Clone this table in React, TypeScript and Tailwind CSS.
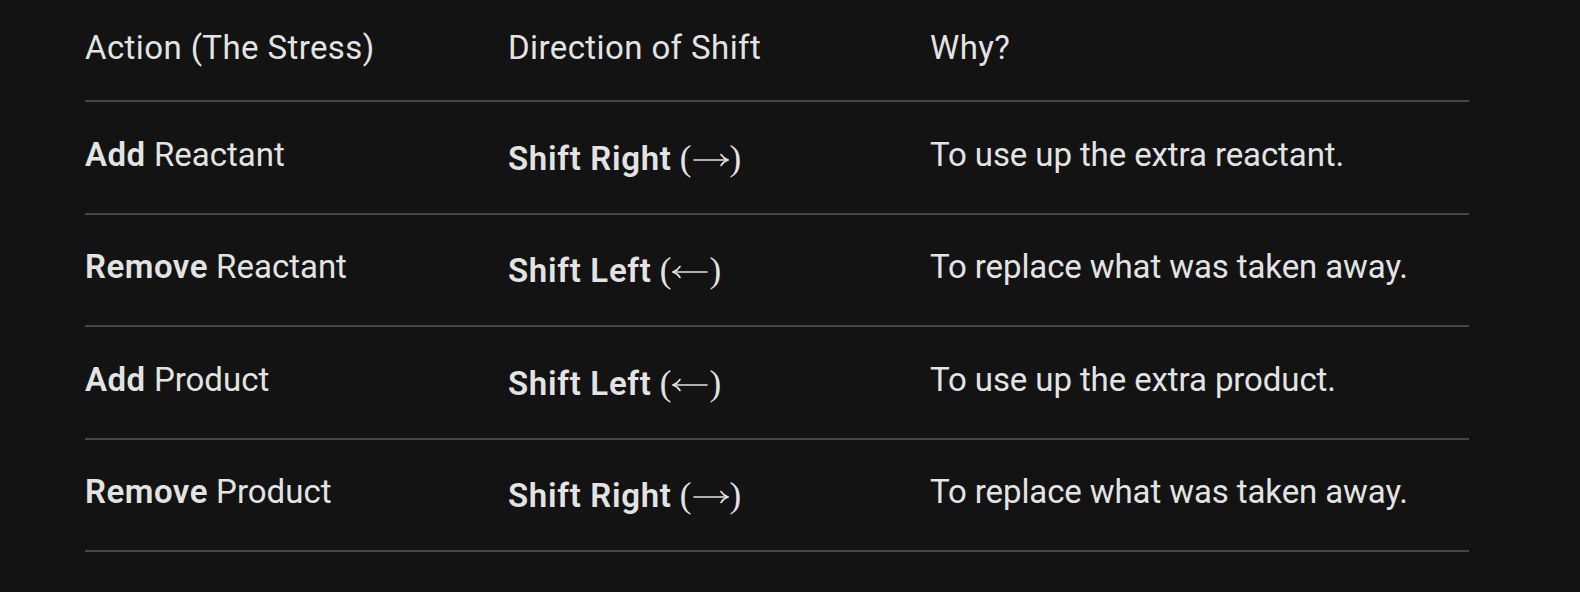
import React from "react";

type Row = {
  verb: string;
  noun: string;
  dir: string;
  right: boolean;
  why: string;
};

const rows: Row[] = [
  { verb: "Add", noun: "Reactant", dir: "Shift Right", right: true, why: "To use up the extra reactant." },
  { verb: "Remove", noun: "Reactant", dir: "Shift Left", right: false, why: "To replace what was taken away." },
  { verb: "Add", noun: "Product", dir: "Shift Left", right: false, why: "To use up the extra product." },
  { verb: "Remove", noun: "Product", dir: "Shift Right", right: true, why: "To replace what was taken away." },
];

function Arrow({ right }: { right: boolean }) {
  return (
    <svg
      width="36"
      height="14"
      viewBox="0 0 36 14"
      className="inline-block align-[3px] mx-[1px]"
      fill="none"
      stroke="#e3e3e3"
      strokeWidth="1.6"
      strokeLinecap="round"
    >
      {right ? (
        <g>
          <path d="M1 7 H34.5" />
          <path d="M28 1.5 Q30.5 5.5 35 7 Q30.5 8.5 28 12.5" />
        </g>
      ) : (
        <g>
          <path d="M1.5 7 H35" />
          <path d="M8 1.5 Q5.5 5.5 1 7 Q5.5 8.5 8 12.5" />
        </g>
      )}
    </svg>
  );
}

function Math({ right }: { right: boolean }) {
  return (
    <span
      className="text-[35px]"
      style={{ fontFamily: "'Liberation Serif', serif" }}
    >
      (<Arrow right={right} />)
    </span>
  );
}

export default function App() {
  return (
    <div
      className="w-[1580px] h-[592px] bg-[#131313] text-[#e3e3e3] pl-[85px] overflow-hidden"
      style={{ fontFamily: "Roboto, 'Noto Sans', sans-serif" }}
    >
      <div className="w-[1384px] text-[33px] leading-[49.5px]">
        <div className="grid grid-cols-[423px_422px_539px] h-[102px] pt-[22.5px] border-b-2 border-[#444746] tracking-[0.4px]">
          <div>Action (The Stress)</div>
          <div>Direction of Shift</div>
          <div>Why?</div>
        </div>
        {rows.map((r, i) => (
          <div
            key={i}
            className="grid grid-cols-[423px_422px_539px] h-[112.5px] border-b-2 border-[#444746]"
          >
            <div className="pt-[27.5px]">
              <span className="font-semibold tracking-[0.5px]">{r.verb}</span> {r.noun}
            </div>
            <div className="pt-[31.5px]">
              <span className="font-semibold tracking-[0.7px]">{r.dir}</span>{" "}
              <Math right={r.right} />
            </div>
            <div className="pt-[27.5px] tracking-[-0.1px]">{r.why}</div>
          </div>
        ))}
      </div>
    </div>
  );
}
